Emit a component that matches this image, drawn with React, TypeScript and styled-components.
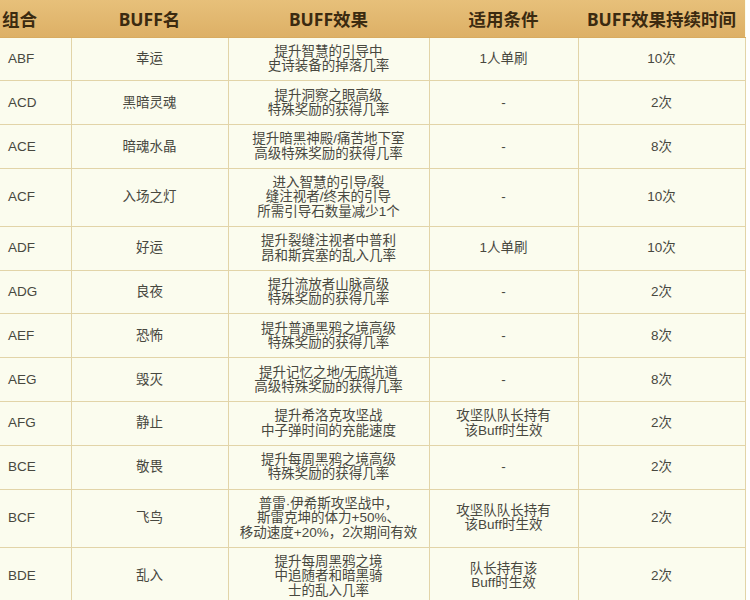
import styled, { createGlobalStyle } from "styled-components";

const GlobalStyle = createGlobalStyle`
  html, body {
    margin: 0;
    padding: 0;
    background: #ffffff;
  }
  body {
    font-family: "Liberation Sans", "Noto Sans CJK SC", sans-serif;
  }
`;

const Table = styled.table`
  width: 745px;
  border-collapse: collapse;
  table-layout: fixed;
  background-color: #fbfcee;
`;
const HeadRow = styled.tr`
  background: linear-gradient(#e7c07a, #ddb066);
  height: 37px;
`;
const HeadCell = styled.th<{ $left?: boolean }>`
  padding: 0 ${(p) => (p.$left ? "2px" : "0")};
  text-align: ${(p) => (p.$left ? "left" : "center")};
  font-family: "Noto Sans", "Noto Sans CJK SC", sans-serif;
  font-size: 17.5px;
  font-weight: 700;
  color: #3b2a10;
  white-space: nowrap;
  border-bottom: 1px solid #d8ab60;
`;
const Cell = styled.td<{ $left?: boolean }>`
  padding: 7.3px ${(p) => (p.$left ? "8px" : "2px")} 6.9px;
  text-align: ${(p) => (p.$left ? "left" : "center")};
  font-size: 13.5px;
  line-height: 14.3px;
  color: #48483f;
  border: 1px solid #e2d4a8;
  white-space: nowrap;
  &:first-child {
    border-left: none;
  }
`;

type Buff = {
  combo: string;
  name: string;
  effect: string[];
  cond: string[];
  time: string;
};

const buffs: Buff[] = [
  { combo: "ABF", name: "幸运", effect: ["提升智慧的引导中", "史诗装备的掉落几率"], cond: ["1人单刷"], time: "10次" },
  { combo: "ACD", name: "黑暗灵魂", effect: ["提升洞察之眼高级", "特殊奖励的获得几率"], cond: ["-"], time: "2次" },
  { combo: "ACE", name: "暗魂水晶", effect: ["提升暗黑神殿/痛苦地下室", "高级特殊奖励的获得几率"], cond: ["-"], time: "8次" },
  { combo: "ACF", name: "入场之灯", effect: ["进入智慧的引导/裂", "缝注视者/终末的引导", "所需引导石数量减少1个"], cond: ["-"], time: "10次" },
  { combo: "ADF", name: "好运", effect: ["提升裂缝注视者中普利", "昂和斯宾塞的乱入几率"], cond: ["1人单刷"], time: "10次" },
  { combo: "ADG", name: "良夜", effect: ["提升流放者山脉高级", "特殊奖励的获得几率"], cond: ["-"], time: "2次" },
  { combo: "AEF", name: "恐怖", effect: ["提升普通黑鸦之境高级", "特殊奖励的获得几率"], cond: ["-"], time: "8次" },
  { combo: "AEG", name: "毁灭", effect: ["提升记忆之地/无底坑道", "高级特殊奖励的获得几率"], cond: ["-"], time: "8次" },
  { combo: "AFG", name: "静止", effect: ["提升希洛克攻坚战", "中子弹时间的充能速度"], cond: ["攻坚队队长持有", "该Buff时生效"], time: "2次" },
  { combo: "BCE", name: "敬畏", effect: ["提升每周黑鸦之境高级", "特殊奖励的获得几率"], cond: ["-"], time: "2次" },
  { combo: "BCF", name: "飞鸟", effect: ["普雷·伊希斯攻坚战中，", "斯雷克坤的体力+50%、", "移动速度+20%，2次期间有效"], cond: ["攻坚队队长持有", "该Buff时生效"], time: "2次" },
  { combo: "BDE", name: "乱入", effect: ["提升每周黑鸦之境", "中追随者和暗黑骑", "士的乱入几率"], cond: ["队长持有该", "Buff时生效"], time: "2次" },
];

function Lines({ lines }: { lines: string[] }) {
  return (
    <>
      {lines.map((l, i) => (
        <span key={i}>
          {i > 0 && <br />}
          {l}
        </span>
      ))}
    </>
  );
}

export default function App() {
  return (
    <>
      <GlobalStyle />
      <Table>
        <colgroup>
          <col style={{ width: 71 }} />
          <col style={{ width: 157 }} />
          <col style={{ width: 201 }} />
          <col style={{ width: 149 }} />
          <col style={{ width: 167 }} />
        </colgroup>
        <thead>
          <HeadRow>
            <HeadCell $left>组合</HeadCell>
            <HeadCell>BUFF名</HeadCell>
            <HeadCell>BUFF效果</HeadCell>
            <HeadCell>适用条件</HeadCell>
            <HeadCell>BUFF效果持续时间</HeadCell>
          </HeadRow>
        </thead>
        <tbody>
          {buffs.map((b) => (
            <tr key={b.combo}>
              <Cell $left>{b.combo}</Cell>
              <Cell>{b.name}</Cell>
              <Cell>
                <Lines lines={b.effect} />
              </Cell>
              <Cell>
                <Lines lines={b.cond} />
              </Cell>
              <Cell>{b.time}</Cell>
            </tr>
          ))}
        </tbody>
      </Table>
    </>
  );
}
